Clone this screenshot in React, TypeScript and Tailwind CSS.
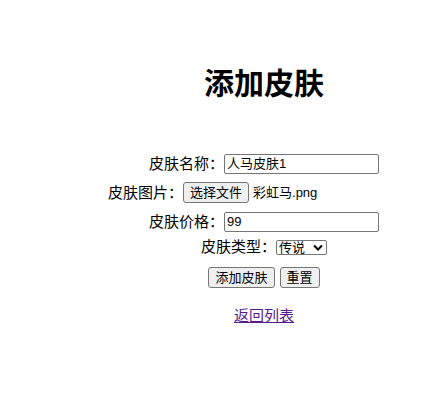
export default function App() {
  const font = "font-['Liberation_Sans','Noto_Sans_CJK_SC',sans-serif]";
  const btn =
    "h-[21px] px-[6px] bg-[#efefef] border border-[#767676] rounded-[3px] text-[13px] leading-[19px] text-black";
  const input =
    "w-[155px] h-[20px] border border-[#767676] rounded-[2px] px-[2px] text-[13px] leading-[18px] text-black bg-white";

  return (
    <div className={`w-[446px] h-[401px] bg-white text-black pl-[82px] pt-[64px] ${font}`}>
      <h1 className="h-[40px] leading-[40px] text-center text-[30px] font-bold">添加皮肤</h1>

      <div className="mt-[46px] flex flex-col">
        <div className="h-[28px] flex items-center justify-center">
          <label className="text-[15px] leading-[20px]">皮肤名称：</label>
          <div className={input}>人马皮肤1</div>
        </div>

        <div className="h-[29px] flex items-center justify-center">
          <label className="text-[15px] leading-[20px]">皮肤图片：</label>
          <div className="w-[237px] flex items-center gap-[4px]">
            <button className={btn}>选择文件</button>
            <span className="text-[13px] leading-[18px]">彩虹马.png</span>
          </div>
        </div>

        <div className="h-[29px] flex items-center justify-center">
          <label className="text-[15px] leading-[20px]">皮肤价格：</label>
          <div className={input}>99</div>
        </div>

        <div className="h-[22px] flex items-center justify-center">
          <label className="text-[15px] leading-[20px]">皮肤类型：</label>
          <div className="w-[51px] h-[15px] border border-[#767676] rounded-[2px] flex items-center justify-between pl-[2px] pr-[3px] text-[13px] leading-[13px]">
            <span>传说</span>
            <svg width="10" height="7" viewBox="0 0 10 7">
              <path d="M1 1.5 L5 5.5 L9 1.5" stroke="black" strokeWidth="2" fill="none" />
            </svg>
          </div>
        </div>

        <div className="h-[38px] flex items-center justify-center gap-[5px]">
          <button className={btn}>添加皮肤</button>
          <button className={btn}>重置</button>
        </div>

        <div className="h-[40px] flex items-center justify-center">
          <a href="#" className="text-[15px] leading-[20px] text-[#551a8b] underline">
            返回列表
          </a>
        </div>
      </div>
    </div>
  );
}
